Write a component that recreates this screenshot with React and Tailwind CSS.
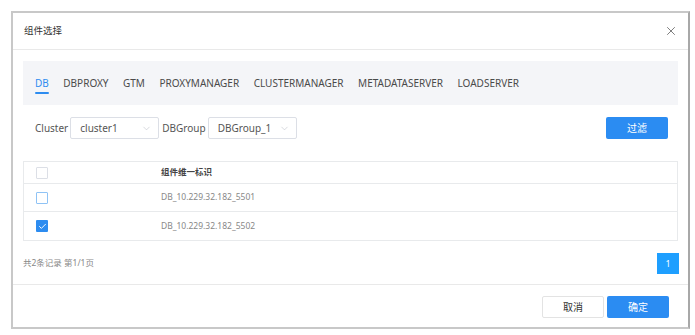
import { X, ChevronDown, Check } from 'lucide-react';

const tabs = ['DB', 'DBPROXY', 'GTM', 'PROXYMANAGER', 'CLUSTERMANAGER', 'METADATASERVER', 'LOADSERVER'];

const rows = [
  { id: 'DB_10.229.32.182_5501', checked: false },
  { id: 'DB_10.229.32.182_5502', checked: true },
];

const font = { fontFamily: '"Noto Sans", "Noto Sans CJK SC", sans-serif' };

function Select({ value, width }) {
  return (
    <div className={`flex items-center justify-between h-[22px] ${width} border border-[#dcdfe6] rounded-[2px] pl-[9px] pr-[6px] text-[#555]`}>
      <span>{value}</span>
      <ChevronDown size={11} strokeWidth={1.2} className="text-[#b8bcc4]" />
    </div>
  );
}

function Box({ checked, tone }) {
  if (checked) {
    return (
      <span className="flex items-center justify-center w-[12px] h-[12px] bg-[#2d8cf0] rounded-[1px]">
        <Check size={9} strokeWidth={2.5} className="text-white" />
      </span>
    );
  }
  return <span className={`block w-[12px] h-[12px] border rounded-[1px] bg-white ${tone}`} />;
}

export default function App() {
  return (
    <div className="w-[695px] h-[335px] bg-white pt-[11px] pl-[11px] text-[10px]" style={font}>
      <div className="w-[679px] h-[318px] border-2 border-[#c8c8c8] border-r-[#a8a8a8] flex flex-col">
        <div className="flex items-center justify-between h-[37px] shrink-0 border-b border-[#e9e9e9] pl-[11px] pr-[10px]">
          <span className="text-[#333] text-[9.5px]">组件选择</span>
          <X size={14} strokeWidth={1.3} className="text-[#555]" />
        </div>

        <div className="flex flex-col px-[10px] pt-[11px]">
          <div className="flex items-center h-[44px] bg-[#f4f5f8] pl-[12px] gap-[14.5px] text-[#4a4a4a]">
            {tabs.map((t, i) => (
              <span key={t} className={`relative ${i === 0 ? 'text-[#2d8cf0]' : ''}`}>
                {t}
                {i === 0 && <span className="absolute left-0 right-0 -bottom-[3px] h-[2px] bg-[#2d8cf0] rounded" />}
              </span>
            ))}
          </div>

          <div className="flex items-center mt-[12px] pl-[12px] pr-[10px] text-[#555]">
            <span className="mr-[2px]">Cluster</span>
            <Select value="cluster1" width="w-[89px]" />
            <span className="ml-[3px] mr-[2px]">DBGroup</span>
            <Select value="DBGroup_1" width="w-[89px]" />
            <button className="ml-auto w-[62px] h-[22px] bg-[#2b8cf2] rounded-[2px] text-white">过滤</button>
          </div>

          <div className="mt-[22px] border border-[#e8eaec]">
            <div className="flex items-center h-[22px] border-b border-[#e8eaec]">
              <span className="w-[137px] pl-[12px]"><Box tone="border-[#dcdfe6]" /></span>
              <span className="text-[#444] font-semibold text-[8.5px]">组件维一标识</span>
            </div>
            {rows.map((r, i) => (
              <div key={r.id} className={`flex items-center h-[28px] ${i === 0 ? 'border-b border-[#e8eaec]' : ''}`}>
                <span className="w-[137px] pl-[12px]"><Box checked={r.checked} tone="border-[#8fc3f5]" /></span>
                <span className="text-[#888] text-[8.5px]">{r.id}</span>
              </div>
            ))}
          </div>

          <div className="flex items-center justify-between mt-[12px]">
            <span className="text-[#888] text-[8.5px]">共2条记录 第1/1页</span>
            <span className="flex items-center justify-center w-[22px] h-[21px] bg-[#1e9fff] text-white text-[9px] -mr-[1px]">1</span>
          </div>
        </div>

        <div className="mt-[10px] border-t border-[#e9e9e9] flex justify-end gap-[3px] pt-[11px] pr-[19px]">
          <button className="w-[62px] h-[22px] border border-[#e3e3e3] rounded-[2px] bg-white text-[#333]">取消</button>
          <button className="w-[62px] h-[22px] bg-[#2b8cf2] rounded-[2px] text-white">确定</button>
        </div>
      </div>
    </div>
  );
}
